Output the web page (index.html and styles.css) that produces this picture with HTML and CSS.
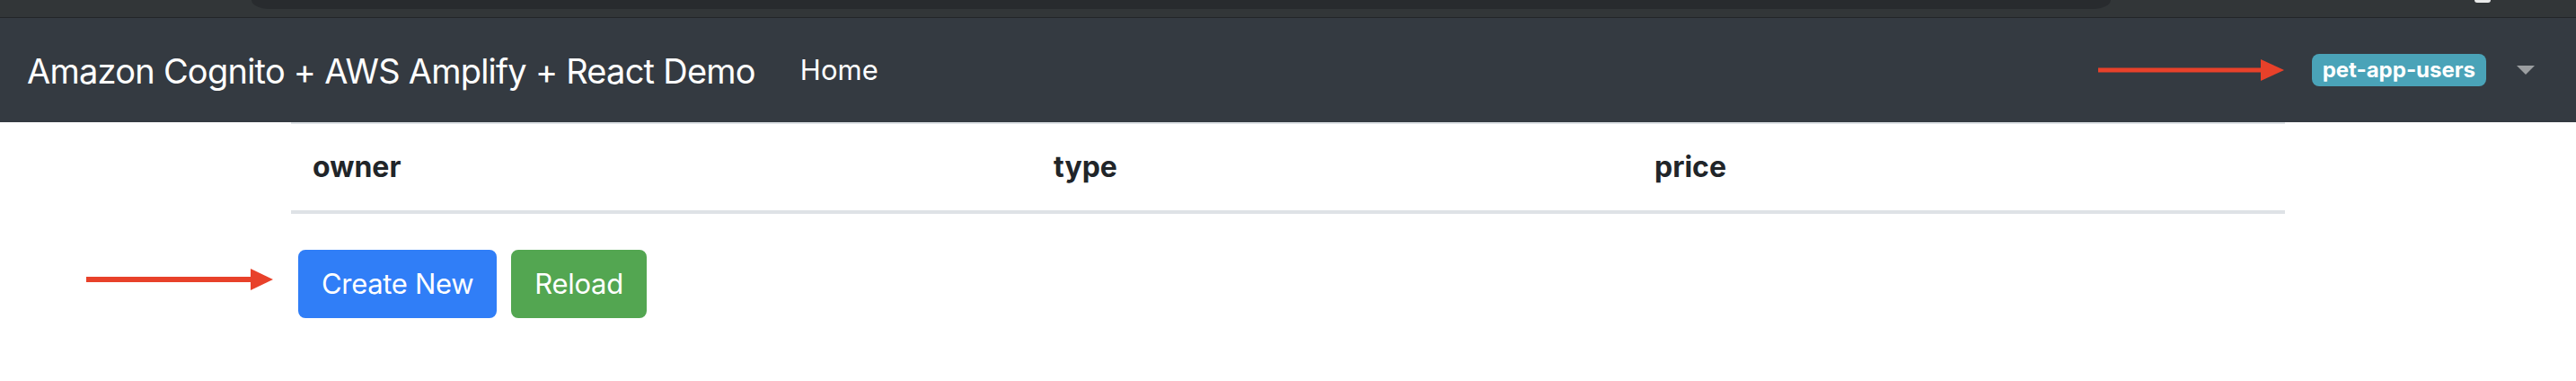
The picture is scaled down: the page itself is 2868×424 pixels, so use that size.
FILE: index.html
```html
<!DOCTYPE html>
<html>
<head>
<meta charset="utf-8">
<link rel="stylesheet" href="styles.css">
</head>
<body>
<div class="chrome">
  <div class="addressbar"></div>
  <div class="avatar"></div>
</div>
<nav class="navbar">
  <span class="brand">Amazon Cognito + AWS Amplify + React Demo</span>
  <span class="navlink">Home</span>
  <div class="navright">
    <svg class="arrow arrow-top" width="207" height="26" viewBox="0 0 207 26">
      <rect x="0" y="10.5" width="184" height="5" fill="#e8412a"/>
      <polygon points="181,1 207,13 181,25" fill="#e8412a"/>
    </svg>
    <span class="badge">pet-app-users</span>
    <span class="caret"></span>
  </div>
</nav>
<main class="container">
  <table class="table">
    <thead>
      <tr>
        <th class="col-owner">owner</th>
        <th class="col-type">type</th>
        <th class="col-price">price</th>
      </tr>
    </thead>
  </table>
  <div class="actions">
    <svg class="arrow arrow-left" width="208" height="26" viewBox="0 0 208 26">
      <rect x="0" y="10" width="186" height="6" fill="#e8412a"/>
      <polygon points="183,1 208,13 183,25" fill="#e8412a"/>
    </svg>
    <button class="btn btn-primary">Create New</button>
    <button class="btn btn-success">Reload</button>
  </div>
</main>
</body>
</html>
```

FILE: styles.css
```css
html, body {
  margin: 0;
  padding: 0;
  background: #ffffff;
  font-family: Inter, "Liberation Sans", Arial, sans-serif;
}

.chrome {
  height: 19px;
  background: #323638;
  border-bottom: 1px solid #222528;
  display: flex;
  padding-left: 280px;
}

.addressbar {
  width: 2070px;
  height: 10px;
  background: #282b2e;
  border-radius: 0 0 20px 20px / 0 0 10px 10px;
}

.avatar {
  width: 18px;
  height: 3px;
  margin-left: 405px;
  background: #e9eaea;
  border-radius: 0 0 9px 9px;
}

.navbar {
  height: 116px;
  background: #343a41;
  display: flex;
  align-items: center;
  padding: 0 46px 0 30px;
  box-sizing: border-box;
}

.brand {
  font-size: 38px;
  letter-spacing: -0.02em;
  color: #ffffff;
  margin-right: 34px;
  line-height: 60px;
  position: relative;
  top: 1px;
}

.navlink {
  font-size: 31px;
  color: #ffffff;
  padding: 0 16px;
  line-height: 48px;
}

.navright {
  margin-left: auto;
  display: flex;
  align-items: center;
}

.arrow {
  display: block;
}

.arrow-top {
  margin-right: 31px;
}

.badge {
  display: inline-block;
  font-size: 24px;
  font-weight: 700;
  line-height: 24px;
  padding: 6px 12px;
  border-radius: 8px;
  background: #4aa3b8;
  color: #ffffff;
}

.caret {
  display: inline-block;
  width: 0;
  height: 0;
  margin-left: 34px;
  border-left: 10px solid transparent;
  border-right: 10px solid transparent;
  border-top: 10px solid #9b9ea1;
}

.container {
  width: 2220px;
  margin: 0 0 0 324px;
}

.table {
  width: 2220px;
  border-collapse: collapse;
  margin-bottom: 32px;
  color: #212529;
}

.table th {
  text-align: left;
  font-size: 32px;
  font-weight: 700;
  line-height: 48px;
  padding: 24px 24px;
  border-top: 2px solid #dee2e6;
  border-bottom: 4px solid #dee2e6;
}

.col-owner { width: 777px; }
.col-type { width: 621px; }
.col-price { width: 678px; }

.actions {
  display: flex;
  align-items: center;
  position: relative;
}

.arrow-left {
  position: absolute;
  left: -228px;
  top: 28px;
}

.btn {
  margin: 8px;
  font-family: Inter, "Liberation Sans", Arial, sans-serif;
  font-size: 31px;
  letter-spacing: -0.01em;
  line-height: 48px;
  padding: 12px 24px;
  border: 2px solid transparent;
  border-radius: 8px;
  color: #ffffff;
}

.btn-primary {
  background: #307ef7;
  border-color: #307ef7;
}

.btn-success {
  background: #53a651;
  border-color: #53a651;
}
```
